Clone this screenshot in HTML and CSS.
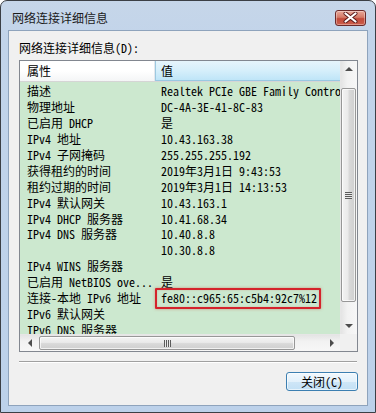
FILE: index.html
```html
<!DOCTYPE html>
<html lang="zh-CN">
<head>
<meta charset="utf-8">
<title>网络连接详细信息</title>
<link rel="stylesheet" href="styles.css">
</head>
<body>
<div class="window">
  <div class="titlebar">
    <span class="title">网络连接详细信息</span>
    <div class="close-btn">
      <svg width="15" height="11" viewBox="0 0 15 11">
        <path d="M2.5 1.5 L12.5 9.5 M12.5 1.5 L2.5 9.5" stroke="#5a1a1a" stroke-width="4" stroke-linecap="round"/>
        <path d="M2.5 1.5 L12.5 9.5 M12.5 1.5 L2.5 9.5" stroke="#ffffff" stroke-width="2.2" stroke-linecap="round"/>
      </svg>
    </div>
  </div>
  <div class="client">
    <div class="caption">网络连接详细信息(<u>D</u>):</div>
    <div class="listbox">
      <div class="content">
        <div class="header">
          <div class="hcell hprop">属性</div>
          <div class="hcell hval">值</div>
        </div>
        <div class="rows">
          <div class="row"><span class="k">描述</span><span class="v">Realtek PCIe GBE Family Controller</span></div>
          <div class="row"><span class="k">物理地址</span><span class="v">DC-4A-3E-41-8C-83</span></div>
          <div class="row"><span class="k">已启用 DHCP</span><span class="v">是</span></div>
          <div class="row"><span class="k">IPv4 地址</span><span class="v">10.43.163.38</span></div>
          <div class="row"><span class="k">IPv4 子网掩码</span><span class="v">255.255.255.192</span></div>
          <div class="row"><span class="k">获得租约的时间</span><span class="v">2019年3月1日 9:43:53</span></div>
          <div class="row"><span class="k">租约过期的时间</span><span class="v">2019年3月1日 14:13:53</span></div>
          <div class="row"><span class="k">IPv4 默认网关</span><span class="v">10.43.163.1</span></div>
          <div class="row"><span class="k">IPv4 DHCP 服务器</span><span class="v">10.41.68.34</span></div>
          <div class="row"><span class="k">IPv4 DNS 服务器</span><span class="v">10.40.8.8</span></div>
          <div class="row"><span class="k"></span><span class="v">10.30.8.8</span></div>
          <div class="row"><span class="k">IPv4 WINS 服务器</span><span class="v"></span></div>
          <div class="row"><span class="k">已启用 NetBIOS ove...</span><span class="v">是</span></div>
          <div class="row"><span class="k">连接-本地 IPv6 地址</span><span class="v">fe80::c965:65:c5b4:92c7%12</span></div>
          <div class="row"><span class="k">IPv6 默认网关</span><span class="v"></span></div>
          <div class="row"><span class="k">IPv6 DNS 服务器</span><span class="v"></span></div>
        </div>
        <div class="highlight"></div>
      </div>
      <div class="vscroll">
        <div class="sbtn"><span class="tri up"></span></div>
        <div class="vtrack"><div class="vthumb"><span class="grip-h"></span></div></div>
        <div class="sbtn"><span class="tri down"></span></div>
      </div>
      <div class="hscroll">
        <div class="sbtn-h"><span class="tri left"></span></div>
        <div class="htrack"><div class="hthumb"><span class="grip-v"></span></div></div>
        <div class="sbtn-h"><span class="tri right"></span></div>
      </div>
      <div class="corner"></div>
    </div>
    <div class="separator"></div>
    <div class="footer">
      <div class="button">关闭(<u>C</u>)</div>
    </div>
  </div>
</div>
</body>
</html>
```

FILE: styles.css
```css
* { box-sizing: border-box; }
html, body { margin: 0; padding: 0; background: #ffffff; }
body { width: 376px; height: 413px; overflow: hidden; }

.window {
  width: 376px;
  height: 413px;
  border: 1px solid #3b3f45;
  border-radius: 7px 7px 0 0;
  background: linear-gradient(to bottom, #c6d6e9 0px, #c2d4ea 40px, #bcd1ea 100%);
  display: flex;
  flex-direction: column;
  overflow: hidden;
}

.titlebar {
  height: 29px;
  display: flex;
  align-items: center;
  justify-content: space-between;
  padding: 0 9px 0 11px;
  flex-shrink: 0;
}
.title {
  font-family: "Noto Sans CJK SC", "Noto Sans", sans-serif;
  font-size: 12px;
  color: #1b1b1b;
  line-height: 16px;
  margin-top: 4px;
}
.close-btn {
  width: 31px;
  height: 16px;
  margin-top: 4px;
  border: 1px solid #6b2a2a;
  border-radius: 3px;
  background: linear-gradient(to bottom, #e9a99a 0%, #d47a68 45%, #c24a3a 55%, #cc5f4c 100%);
  display: flex;
  align-items: center;
  justify-content: center;
  box-shadow: inset 0 0 0 1px rgba(255,255,255,0.35);
}

.client {
  margin: 0 7px 6px 7px;
  flex: 1;
  background: #f0f0f0;
  border: 1px solid #8ea3bc;
  padding: 9px 9px 0 10px;
  display: flex;
  flex-direction: column;
}

.caption {
  font-family: "Noto Sans Mono CJK SC", "Liberation Mono", "Noto Sans CJK SC", monospace;
  font-size: 12px;
  line-height: 16px;
  color: #000;
  height: 20px;
  padding-left: 0;
}
.caption u { text-decoration: none; }

.listbox {
  width: 339px;
  height: 292px;
  border: 1px solid #828790;
  background: #ffffff;
  display: grid;
  grid-template-columns: 320px 17px;
  grid-template-rows: 273px 17px;
}

.content {
  position: relative;
  overflow: hidden;
  background: #cce8cf;
  display: flex;
  flex-direction: column;
}

.header {
  height: 21px;
  display: flex;
  flex-shrink: 0;
  border-bottom: 1px solid #d5d5d5;
}
.hcell {
  font-family: "Noto Sans CJK SC", "Noto Sans", sans-serif;
  font-size: 12px;
  line-height: 20px;
  color: #000;
}
.hprop {
  width: 135px;
  padding-left: 7px;
  background: linear-gradient(to bottom, #ffffff 0%, #ffffff 50%, #f4f5f6 100%);
  border-right: 1px solid #e3e8ee;
}
.hval {
  flex: 1;
  padding-left: 5px;
  background: linear-gradient(to bottom, #e6f5fc 0%, #d6effb 50%, #bfe5f8 100%);
  border-left: 1px solid #9dc9e0;
  border-bottom: 1px solid #99c8e2;
}

.rows { padding-top: 1px; }
.row {
  height: 15.9px;
  display: flex;
  align-items: center;
  font-family: "Noto Sans Mono CJK SC", "Liberation Mono", "Noto Sans CJK SC", monospace;
  font-size: 12px;
  color: #000;
  white-space: nowrap;
}
.k {
  width: 135px;
  padding-left: 7px;
  overflow: hidden;
  flex-shrink: 0;
}
.v {
  padding-left: 6px;
}

.highlight {
  position: absolute;
  left: 135px;
  top: 227px;
  width: 166px;
  height: 21px;
  border: 2px solid #d4232b;
  border-radius: 1px;
  box-shadow: 0 0 3px rgba(200, 80, 60, 0.55), inset 0 0 2px rgba(200, 80, 60, 0.35);
}

.vscroll {
  display: flex;
  flex-direction: column;
  background: linear-gradient(to right, #e4e4e4 0%, #f2f2f2 40%, #f7f7f7 100%);
  border-left: 1px solid #e6e6e6;
}
.sbtn {
  height: 17px;
  display: flex;
  align-items: center;
  justify-content: center;
  flex-shrink: 0;
}
.vtrack {
  flex: 1;
  padding: 10px 1px 0 0;
}
.vthumb {
  height: 214px;
  border: 1px solid #979797;
  border-radius: 2px;
  background: linear-gradient(to right, #f3f3f3 0%, #eaeaea 45%, #d9d9d9 55%, #cfcfcf 100%);
  display: flex;
  align-items: center;
  justify-content: center;
  box-shadow: inset 0 0 0 1px rgba(255,255,255,0.7);
}
.grip-h {
  width: 7px;
  height: 7px;
  background: repeating-linear-gradient(to bottom, #5b5b5b 0px, #5b5b5b 1px, #e8e8e8 1px, #e8e8e8 2px);
}

.hscroll {
  display: flex;
  background: linear-gradient(to bottom, #e4e4e4 0%, #f2f2f2 40%, #f7f7f7 100%);
  border-top: 1px solid #e6e6e6;
}
.sbtn-h {
  width: 17px;
  display: flex;
  align-items: center;
  justify-content: center;
  flex-shrink: 0;
}
.htrack {
  flex: 1;
  padding: 1px 28px 1px 2px;
}
.hthumb {
  height: 100%;
  border: 1px solid #979797;
  border-radius: 2px;
  background: linear-gradient(to bottom, #f3f3f3 0%, #eaeaea 45%, #d9d9d9 55%, #cfcfcf 100%);
  display: flex;
  align-items: center;
  justify-content: center;
  box-shadow: inset 0 0 0 1px rgba(255,255,255,0.7);
}
.grip-v {
  width: 7px;
  height: 7px;
  background: repeating-linear-gradient(to right, #5b5b5b 0px, #5b5b5b 1px, #e8e8e8 1px, #e8e8e8 2px);
}
.corner { background: #f0f0f0; }

.tri { width: 0; height: 0; display: block; }
.tri.up { border-left: 4px solid transparent; border-right: 4px solid transparent; border-bottom: 4px solid #4d4d4d; margin-top: -2px; }
.tri.down { border-left: 4px solid transparent; border-right: 4px solid transparent; border-top: 4px solid #4d4d4d; }
.tri.left { border-top: 4px solid transparent; border-bottom: 4px solid transparent; border-right: 4px solid #4d4d4d; margin-left: 2px; }
.tri.right { border-top: 4px solid transparent; border-bottom: 4px solid transparent; border-left: 4px solid #4d4d4d; }

.separator {
  margin-top: 9px;
  width: 338px;
  border-top: 1px solid #a0a0a0;
  border-bottom: 1px solid #ffffff;
}

.footer {
  display: flex;
  justify-content: flex-end;
  padding: 9px 0 0 0;
  width: 339px;
}
.button {
  width: 72px;
  height: 19px;
  border: 1px solid #3c7fb1;
  border-radius: 3px;
  background: linear-gradient(to bottom, #f1f8fd 0%, #e3f1fb 50%, #cfe6f7 51%, #c2e0f5 100%);
  box-shadow: inset 0 0 0 1px rgba(255,255,255,0.6);
  font-family: "Noto Sans Mono CJK SC", "Liberation Mono", "Noto Sans CJK SC", monospace;
  font-size: 12px;
  line-height: 17px;
  text-align: center;
  color: #000;
}
.button u { text-decoration: none; }
```
